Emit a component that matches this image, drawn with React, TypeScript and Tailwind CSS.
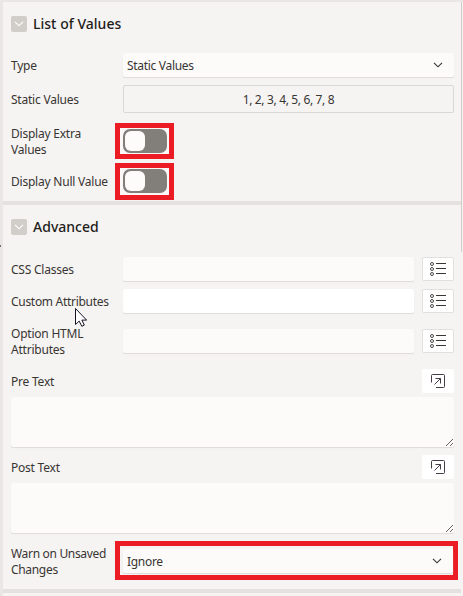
import type { ReactNode } from "react";

function Chevron({ className = "" }: { className?: string }) {
  return (
    <svg className={className} width="10" height="6" viewBox="0 0 10 6" fill="none" stroke="currentColor" strokeWidth="1.15">
      <path d="M1 .8 5 4.8 9 .8" />
    </svg>
  );
}

function SectionTitle({ children }: { children: ReactNode }) {
  return (
    <div className="flex h-[43px] items-center gap-1.5 pl-2">
      <button className="flex size-4 items-center justify-center rounded-[2px] bg-[#d1cdc9] text-white">
        <Chevron />
      </button>
      <h2 className="text-[14px] leading-5 font-medium tracking-[0.02px] whitespace-nowrap text-[#1f1c1a]">{children}</h2>
    </div>
  );
}

function Row({ label, height, children }: { label: ReactNode; height: string; children: ReactNode }) {
  return (
    <div className={`flex items-center pr-[7px] pl-2 ${height}`}>
      <div className="relative top-px w-28 shrink-0 leading-4 whitespace-nowrap">{label}</div>
      {children}
    </div>
  );
}

function Select({ value }: { value: string }) {
  return (
    <div className="flex h-6 flex-1 items-center justify-between rounded-[2px] bg-[#fcfbfa] pr-[11px] pl-1 shadow-[0_1px_1px_#dedbd9]">
      <span className="relative top-px tracking-[-0.3px]">{value}</span>
      <Chevron className="text-[#393532]" />
    </div>
  );
}

function Switch({ padding = "pb-px" }: { padding?: string }) {
  return (
    <div className={`-ml-2 border-5 border-[#ec1c24] bg-[#faf7f6] pt-px pr-[2px] pl-[3px] ${padding}`}>
      <div className="h-6 w-11 rounded-[7px] bg-[#827e7a] p-0.5">
        <div className="size-5 rounded-[6px] bg-[#fdfcfb]" />
      </div>
    </div>
  );
}

function ListField({ active = false }: { active?: boolean }) {
  return (
    <div className="flex flex-1 gap-2">
      <div className={`h-6 flex-1 rounded-[2px] shadow-[0_1px_1px_#dedbd9] ${active ? "bg-white" : "bg-[#fcfbfa]"}`} />
      <button className="flex h-6 w-8 items-center justify-center rounded-[2px] border border-[#e2e0de] bg-white">
        <svg width="18" height="16" viewBox="0 0 18 16" fill="none" stroke="#393532">
          <path d="M7 2.5h10M7 7.5h10M7 12.5h10" />
          <g strokeWidth=".9">
            <circle cx="3" cy="3" r="1.5" />
            <circle cx="3" cy="8" r="1.5" />
            <circle cx="3" cy="13" r="1.5" />
          </g>
        </svg>
      </button>
    </div>
  );
}

function TextBlock({ label }: { label: string }) {
  return (
    <div className="flex h-[86px] flex-col gap-1 pr-[7px] pl-2">
      <div className="flex h-6 items-center justify-between">
        <span className="relative top-px">{label}</span>
        <button className="flex h-6 w-8 items-center justify-center rounded-[2px] bg-white">
          <svg width="16" height="16" viewBox="0 0 16 16" fill="none" stroke="#453c48">
            <path d="M1.5 9.5V2.5q0-1 1-1h11q1 0 1 1v11q0 1-1 1H6M4.5 11.5l6-6M5.5 5.5h5V10.5" />
          </svg>
        </button>
      </div>
      <div className="flex h-[50px] items-end justify-end rounded-[2px] bg-[#fcfbfa] shadow-[0_1px_1px_#dedbd9]">
        <svg width="9" height="9" viewBox="0 0 9 9" stroke="#55504d" strokeWidth=".9">
          <path d="M1 8 8 1M5 8l3-3" />
        </svg>
      </div>
    </div>
  );
}

export default function App() {
  return (
    <main className="h-[596px] w-[463px] border-t-2 border-l-3 border-[#e9e6e4] bg-[#f5f4f2] font-['Noto_Sans','Open_Sans',sans-serif] text-[12px] tracking-[-0.22px] text-[#393532]">
      <div className="flex h-full">
        <div className="flex w-[458px] flex-col">
          <section className="h-[199px]">
            <SectionTitle>List of Values</SectionTitle>
            <Row label="Type" height="h-10"><Select value="Static Values" /></Row>
            <Row label="Static Values" height="h-7">
              <button className="h-7 flex-1 rounded-[2px] border border-[#dad8d6] pt-0.5 text-center tracking-[-0.35px]">1, 2, 3, 4, 5, 6, 7, 8</button>
            </Row>
            <div className="h-2" />
            <Row label={<>Display Extra<br />Values</>} height="h-10"><Switch /></Row>
            <Row label="Display Null Value" height="h-10"><Switch padding="pb-0.5" /></Row>
          </section>
          <div className="h-1 bg-[#e4e1df]" />
          <section className="h-[384px]">
            <SectionTitle>Advanced</SectionTitle>
            <div className="h-[5px]" />
            <Row label="CSS Classes" height="h-8"><ListField /></Row>
            <Row label={<span className="tracking-[-0.3px]">Custom Attributes</span>} height="h-8"><ListField active /></Row>
            <Row label={<>Option HTML<br />Attributes</>} height="h-12"><ListField /></Row>
            <div className="h-1" />
            <TextBlock label="Pre Text" />
            <TextBlock label="Post Text" />
            <Row label={<span className="tracking-[-0.32px]">Warn on Unsaved<br />Changes</span>} height="h-10">
              <div className="-mt-px -mr-1 -ml-2 flex h-[39px] flex-1 border-5 border-[#ec1c24] pt-[3px] pl-[3px]">
                <Select value="Ignore" />
              </div>
            </Row>
          </section>
          <div className="h-1 bg-[#e4e1df]" />
        </div>
        <div className="h-[250px] w-px bg-[#d0cdcb]" />
      </div>
      <svg className="absolute top-[307px] left-[74px]" width="14" height="21" viewBox="0 0 14 21" fill="white" stroke="#171325" strokeWidth="1">
        <path d="M1.5 1.5v16l3.7-3.4 2.6 5.2 2.5-1.2-2.4-5h4.7z" />
      </svg>
      <div className="absolute top-[245px] left-0 h-[2px] w-px bg-[#777371]" />
    </main>
  );
}
